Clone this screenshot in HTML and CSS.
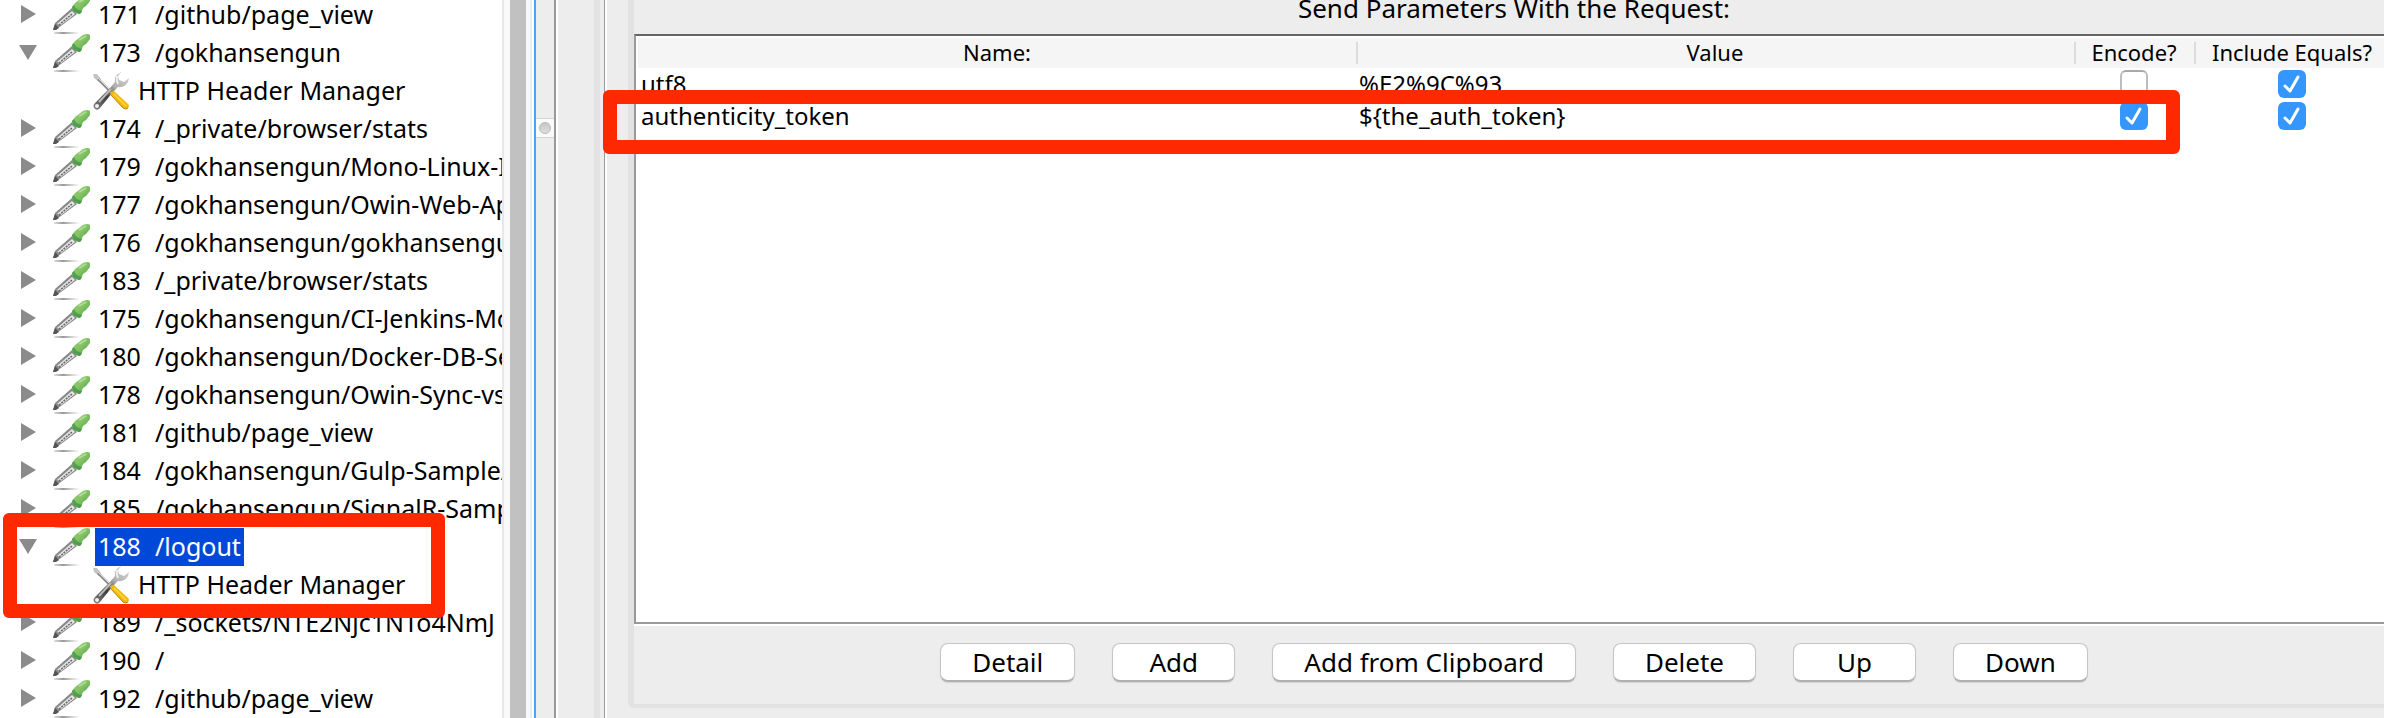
FILE: index.html
```html
<!DOCTYPE html>
<html lang="en">
<head>
<meta charset="utf-8">
<title>HTTP Request Parameters</title>
<link rel="stylesheet" href="styles.css">
</head>
<body>
<svg class="sprites" width="0" height="0" aria-hidden="true">
  <defs>
    <linearGradient id="bulb" x1="0" y1="0" x2="1" y2="1">
      <stop offset="0" stop-color="#8fcb72"/><stop offset=".45" stop-color="#86c566"/><stop offset="1" stop-color="#4b9a47"/>
    </linearGradient>
    <linearGradient id="shade" x1="0" y1="0" x2="1" y2="0">
      <stop offset="0" stop-color="#999" stop-opacity=".3"/><stop offset=".35" stop-color="#999"/><stop offset="1" stop-color="#aaa" stop-opacity="0"/>
    </linearGradient>
    <linearGradient id="steel" x1="1" y1="0" x2="0" y2="1">
      <stop offset="0" stop-color="#d8d8d8"/><stop offset=".4" stop-color="#b0b0b0"/><stop offset=".65" stop-color="#3c3c3c"/><stop offset="1" stop-color="#888"/>
    </linearGradient>
  </defs>
  <symbol id="dropper" viewBox="0 0 38 38">
    <rect x="2" y="36" width="26" height="2" fill="url(#shade)"/>
    <path d="M1 34l2-7 17-15 5 6-16 12-6 4z" fill="#8a8a8a"/>
    <path d="M5 28l15-13 3 3-14 11z" fill="#e6e6e6"/>
    <path d="M7 29l13-11" stroke="#666" stroke-width="1.500" stroke-dasharray="2 1"/>
    <path d="M1 34l2-6 4 4-3 2z" fill="#555"/>
    <path d="M20 11l3-4 4-3 4-3q5-2 7 0v4l-4 5-3 2-2 5q-2 2-4 0-5-1-5-6z" fill="url(#bulb)"/>
    <path d="M20 11l2-2q2 5 8 6l-1 2q-2 2-4 0-5-1-5-6z" fill="#439447" opacity=".75"/>
    <path d="M27 6l7-4" stroke="#b0dc98" stroke-width="2"/>
  </symbol>
  <symbol id="tools" viewBox="0 0 38 38">
    <path d="M1 2l4 0 4 5-2 3-5-4z" fill="#c4c4c4"/>
    <path d="M6 7l14 14" stroke="#8c8c8c" stroke-width="2.500"/>
    <path d="M6 6l13 13" stroke="#ddd" stroke-width="1"/>
    <path d="M28 1q-6 2-5 9l-5 6-15 15q-3 3 0 6 3 2 5-1l13-16 5-5q7 1 10-5l1-4-5 4-5-2-1-4 4-5-1 0z" fill="url(#steel)"/>
    <path d="M25 4q-1 4 1 8" stroke="#f1f1f1" stroke-width="2" fill="none"/>
    <path d="M7 30l12-13" stroke="#bbb" stroke-width="2"/>
    <circle cx="5" cy="34" r="2" fill="#eee"/>
    <path d="M18 20l4-1 14 13q2 2 0 4-3 2-5 0l-12-13z" fill="#f3b90c"/>
    <path d="M22 22l12 12" stroke="#ffd83a" stroke-width="1.500"/>
    <path d="M19 23l12 13q3 2 5 0" stroke="#bd8608" stroke-width="1" fill="none"/>
  </symbol>
  <symbol id="closed" viewBox="0 0 18 18"><path d="M2 0v18l15-9z" fill="#8b8b8b"/></symbol>
  <symbol id="open" viewBox="0 0 18 18"><path d="M0 2h18l-9 15z" fill="#8b8b8b"/></symbol>
</svg>

<div class="window">
  <nav class="tree-pane" aria-label="Test plan">
    <ul class="tree">
      <li class="node"><button class="toggle" aria-label="Expand"><svg><use href="#closed"/></svg></button><svg class="icon"><use href="#dropper"/></svg><span class="label"><span class="num">171 </span>/github/page_view</span></li>
      <li class="node"><button class="toggle" aria-label="Collapse"><svg><use href="#open"/></svg></button><svg class="icon"><use href="#dropper"/></svg><span class="label"><span class="num">173 </span>/gokhansengun</span></li>
      <li class="node child"><svg class="icon"><use href="#tools"/></svg><span class="label">HTTP Header Manager</span></li>
      <li class="node"><button class="toggle" aria-label="Expand"><svg><use href="#closed"/></svg></button><svg class="icon"><use href="#dropper"/></svg><span class="label"><span class="num">174 </span>/_private/browser/stats</span></li>
      <li class="node"><button class="toggle" aria-label="Expand"><svg><use href="#closed"/></svg></button><svg class="icon"><use href="#dropper"/></svg><span class="label"><span class="num">179 </span>/gokhansengun/Mono-Linux-I</span></li>
      <li class="node"><button class="toggle" aria-label="Expand"><svg><use href="#closed"/></svg></button><svg class="icon"><use href="#dropper"/></svg><span class="label"><span class="num">177 </span>/gokhansengun/Owin-Web-Ap</span></li>
      <li class="node"><button class="toggle" aria-label="Expand"><svg><use href="#closed"/></svg></button><svg class="icon"><use href="#dropper"/></svg><span class="label"><span class="num">176 </span>/gokhansengun/gokhansengun</span></li>
      <li class="node"><button class="toggle" aria-label="Expand"><svg><use href="#closed"/></svg></button><svg class="icon"><use href="#dropper"/></svg><span class="label"><span class="num">183 </span>/_private/browser/stats</span></li>
      <li class="node"><button class="toggle" aria-label="Expand"><svg><use href="#closed"/></svg></button><svg class="icon"><use href="#dropper"/></svg><span class="label"><span class="num">175 </span>/gokhansengun/CI-Jenkins-Mo</span></li>
      <li class="node"><button class="toggle" aria-label="Expand"><svg><use href="#closed"/></svg></button><svg class="icon"><use href="#dropper"/></svg><span class="label"><span class="num">180 </span>/gokhansengun/Docker-DB-Se</span></li>
      <li class="node"><button class="toggle" aria-label="Expand"><svg><use href="#closed"/></svg></button><svg class="icon"><use href="#dropper"/></svg><span class="label"><span class="num">178 </span>/gokhansengun/Owin-Sync-vs</span></li>
      <li class="node"><button class="toggle" aria-label="Expand"><svg><use href="#closed"/></svg></button><svg class="icon"><use href="#dropper"/></svg><span class="label"><span class="num">181 </span>/github/page_view</span></li>
      <li class="node"><button class="toggle" aria-label="Expand"><svg><use href="#closed"/></svg></button><svg class="icon"><use href="#dropper"/></svg><span class="label"><span class="num">184 </span>/gokhansengun/Gulp-Sample/</span></li>
      <li class="node"><button class="toggle" aria-label="Expand"><svg><use href="#closed"/></svg></button><svg class="icon"><use href="#dropper"/></svg><span class="label"><span class="num">185 </span>/gokhansengun/SignalR-Samp</span></li>
      <li class="node"><button class="toggle" aria-label="Collapse"><svg><use href="#open"/></svg></button><svg class="icon"><use href="#dropper"/></svg><span class="label selected"><span class="num">188 </span>/logout</span></li>
      <li class="node child"><svg class="icon"><use href="#tools"/></svg><span class="label">HTTP Header Manager</span></li>
      <li class="node"><button class="toggle" aria-label="Expand"><svg><use href="#closed"/></svg></button><svg class="icon"><use href="#dropper"/></svg><span class="label"><span class="num">189 </span>/_sockets/NTE2Njc1NTo4NmJ</span></li>
      <li class="node"><button class="toggle" aria-label="Expand"><svg><use href="#closed"/></svg></button><svg class="icon"><use href="#dropper"/></svg><span class="label"><span class="num">190 </span>/</span></li>
      <li class="node"><button class="toggle" aria-label="Expand"><svg><use href="#closed"/></svg></button><svg class="icon"><use href="#dropper"/></svg><span class="label"><span class="num">192 </span>/github/page_view</span></li>
    </ul>
    <div class="mark mark-tree"></div>
  </nav>
  <div class="scrollbar"><div class="thumb"></div></div>
  <div class="splitter"><div class="grip"><span class="knob"></span></div></div>
  <div class="gutter"></div>

  <main class="editor">
    <section class="panel">
      <h1 class="title">Send Parameters With the Request:</h1>
      <div class="table-box">
        <table class="params">
          <colgroup><col><col><col class="col-encode"><col class="col-equals"></colgroup>
          <thead>
            <tr><th>Name:</th><th>Value</th><th>Encode?</th><th>Include Equals?</th></tr>
          </thead>
          <tbody>
            <tr><td>utf8</td><td>%E2%9C%93</td><td class="tick"><input type="checkbox" aria-label="Encode utf8"></td><td class="tick"><input type="checkbox" aria-label="Include equals utf8" checked></td></tr>
            <tr><td>authenticity_token</td><td>${the_auth_token}</td><td class="tick"><input type="checkbox" aria-label="Encode authenticity_token" checked></td><td class="tick"><input type="checkbox" aria-label="Include equals authenticity_token" checked></td></tr>
          </tbody>
        </table>
        <div class="mark mark-row"></div>
      </div>
      <div class="actions">
        <button class="btn">Detail</button>
        <button class="btn">Add</button>
        <button class="btn">Add from Clipboard</button>
        <button class="btn">Delete</button>
        <button class="btn">Up</button>
        <button class="btn">Down</button>
      </div>
    </section>
  </main>
</div>
</body>
</html>
```
FILE: styles.css
```css
* { box-sizing: border-box; }

body {
  margin: 0;
  background: #ededed;
  color: #000;
  font-family: "Noto Sans", "Open Sans", sans-serif;
  font-size: 24px;
}

.sprites { position: absolute; }

.window {
  display: flex;
  height: 100vh;
  overflow: hidden;
}

/* Tree */
.tree-pane {
  position: relative;
  flex: 0 0 502px;
  overflow: hidden;
  background: #fff;
}

.tree {
  margin: -4px 0 0;
  padding: 0;
  list-style: none;
  font-size: 25px;
}

.node {
  display: flex;
  height: 38px;
  padding-left: 19px;
  white-space: nowrap;
}

.node.child { padding-left: 92px; }

.toggle {
  display: flex;
  flex: none;
  align-items: center;
  width: 33px;
  padding: 0 0 2px;
  border: 0;
  background: none;
}

.toggle svg { width: 18px; height: 18px; }

.icon {
  flex: none;
  width: 38px;
  height: 38px;
}

.label {
  margin-left: 5px;
  padding: 0 3px 2px;
  line-height: 36px;
}

.selected { background: #0049d8; color: #fff; }

.num {
  display: inline-block;
  width: 57px;
}

.scrollbar {
  flex: 0 0 32px;
  padding: 0 8px;
  background: linear-gradient(90deg, #e8e8e8 2px, #f9f9f9 2px 28px, #ececec 28px 30px, #fff 30px);
}

.thumb { height: 100%; background: #c1c1c1; }

.splitter {
  flex: 0 0 24px;
  padding-top: 118px;
  border-left: 2px solid #50a3ee;
  border-right: 2px solid #fff;
  box-shadow: inset -2px 0 #999;
}

.grip {
  display: flex;
  align-items: center;
  justify-content: center;
  height: 20px;
  margin-right: 2px;
  border: solid #d5d5d5;
  border-width: 1px 0;
  background: #fafafa;
}

.knob {
  width: 12px;
  height: 12px;
  border: 1px solid #b9b9b9;
  border-radius: 50%;
  background: linear-gradient(#c6c6c6, #dedede);
}

.gutter {
  flex: 0 0 42px;
  border-right: 6px solid #e3e3e3;
}

/* Parameter editor */
.editor {
  flex: 1;
  min-width: 0;
  margin-left: 4px;
  padding: 0 0 10px 23px;
  border-left: 1px solid #999;
  box-shadow: inset 2px 0 #fff;
}

.panel {
  display: flex;
  flex-direction: column;
  height: 100%;
  margin-right: -6px;
  border: solid #e2e2e2;
  border-width: 0 0 4px 6px;
  border-radius: 0 0 0 6px;
}

.title {
  margin: 0 0 18px;
  padding-left: 4px;
  font-size: 26px;
  font-weight: 400;
  line-height: 16px;
  text-align: center;
}

.table-box {
  position: relative;
  flex: 1;
  padding: 2px 0 0 2px;
  border: 2px solid #999;
  border-top-color: #666;
  border-right: 0;
  background: #fff;
  box-shadow: 0 2px #fff;
}

.params {
  width: 100%;
  border-collapse: collapse;
  table-layout: fixed;
}

.col-encode { width: 120px; }
.col-equals { width: 196px; }

th {
  height: 30px;
  padding: 0 0 2px;
  background: linear-gradient(#dcdcdc, #dcdcdc) left 4px / 2px 22px no-repeat #f5f5f5;
  font-size: 22px;
  font-weight: 400;
  line-height: 28px;
}

th:first-child { background: #f5f5f5; }

td {
  height: 32px;
  padding: 0 3px;
  line-height: 32px;
}

.tick { text-align: center; }

input[type="checkbox"] {
  display: block;
  width: 28px;
  height: 28px;
  margin: 0 auto;
  border: 2px solid #bdbdbd;
  border-top-color: #a8a8a8;
  border-radius: 6px;
  background: #fff;
  appearance: none;
}

input[type="checkbox"]:checked {
  border: 0;
  background: #3596fd url("data:image/svg+xml,%3Csvg xmlns='http://www.w3.org/2000/svg' viewBox='0 0 28 28'%3E%3Cpath d='M7 16l5 5 8-14' fill='none' stroke='white' stroke-width='3' stroke-linecap='round' stroke-linejoin='round'/%3E%3C/svg%3E");
}

.actions {
  display: flex;
  justify-content: center;
  gap: 37px;
  padding: 19px 0 22px 4px;
}

.btn {
  min-width: 123px;
  height: 39px;
  padding: 0 31px;
  border: 1px solid #c6c6c6;
  border-bottom: 2px solid #b0b0b0;
  border-radius: 8px;
  background: #fff;
  box-shadow: 0 1px 1px #d5d5d5;
  color: #000;
  font-family: inherit;
  font-size: 26px;
  line-height: 36px;
}

/* Highlight frames drawn over the content */
.mark {
  position: absolute;
  border: 14px solid #ff2900;
  border-radius: 6px;
  pointer-events: none;
}

.mark-tree {
  top: 513px;
  left: 3px;
  width: 442px;
  height: 105px;
}

.mark-row {
  top: 54px;
  right: 210px;
  left: -33px;
  height: 64px;
}
```
